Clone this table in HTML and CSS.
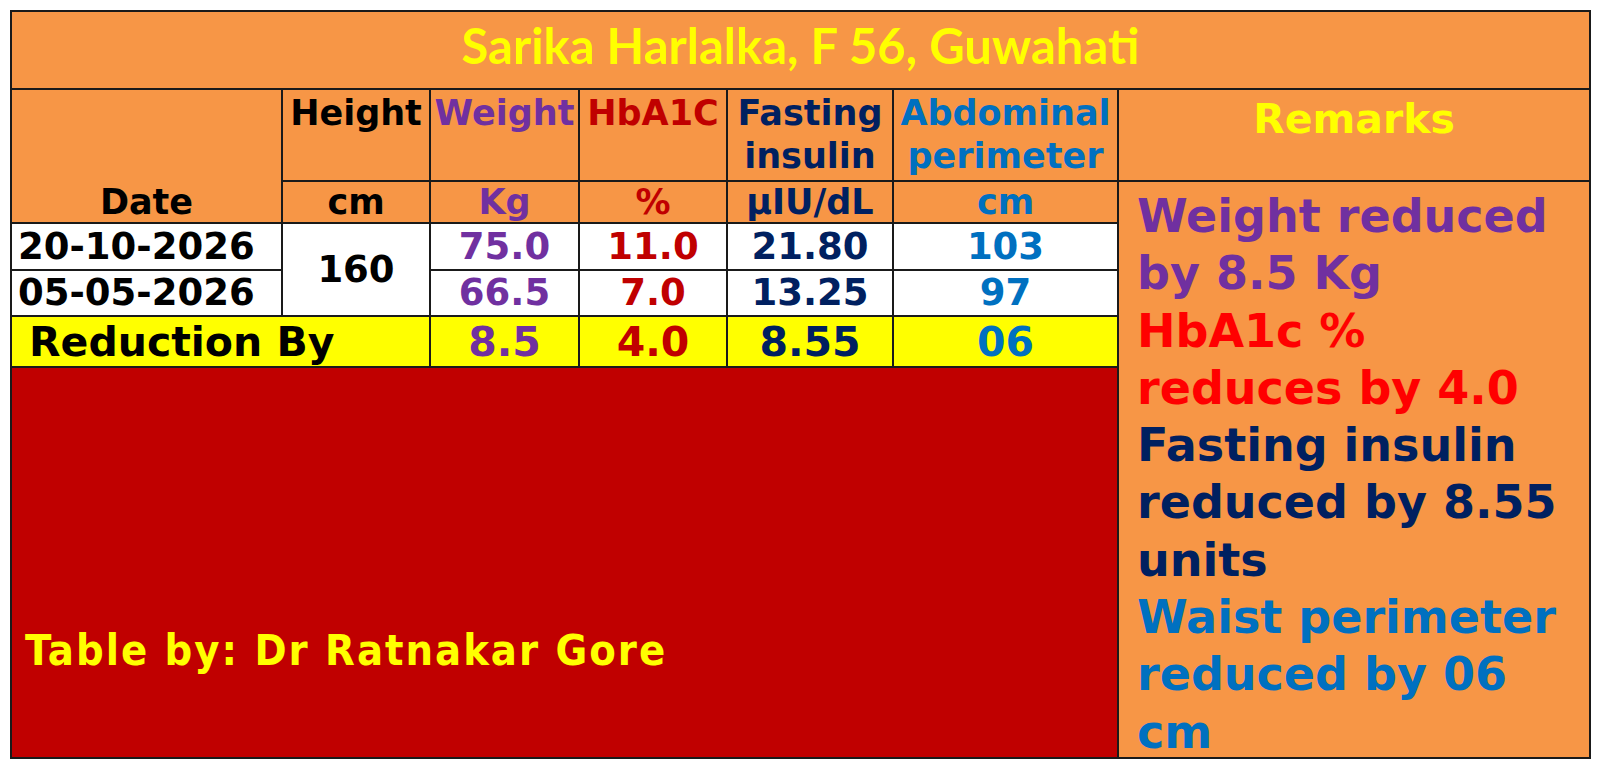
FILE: index.html
```html
<!DOCTYPE html>
<html lang="en">
<head>
<meta charset="utf-8">
<title>Sarika Harlalka</title>
<link rel="stylesheet" href="styles.css">
</head>
<body>
<table class="sheet">
  <colgroup>
    <col class="col-date">
    <col class="col-height">
    <col class="col-weight">
    <col class="col-hba">
    <col class="col-fast">
    <col class="col-abd">
    <col class="col-rem">
  </colgroup>
  <tr class="row-title">
    <td colspan="7" class="title">Sarika Harlalka, F 56, Guwahati</td>
  </tr>
  <tr class="row-head">
    <td rowspan="2" class="date-head">Date</td>
    <td class="head black">Height</td>
    <td class="head purple">Weight</td>
    <td class="head crimson">HbA1C</td>
    <td class="head navy">Fasting<br>insulin</td>
    <td class="head blue">Abdominal<br>perimeter</td>
    <td class="remarks-head">Remarks</td>
  </tr>
  <tr class="row-unit">
    <td class="unit black">cm</td>
    <td class="unit purple">Kg</td>
    <td class="unit crimson">%</td>
    <td class="unit navy">µIU/dL</td>
    <td class="unit blue">cm</td>
    <td rowspan="5" class="remarks">
      <p class="note purple">Weight reduced by 8.5 Kg</p>
      <p class="note red">HbA1c % reduces by 4.0</p>
      <p class="note navy">Fasting insulin reduced by 8.55 units</p>
      <p class="note blue">Waist perimeter reduced by 06 cm</p>
    </td>
  </tr>
  <tr class="row-data1">
    <td class="date black">20-10-2026</td>
    <td rowspan="2" class="val black">160</td>
    <td class="val purple">75.0</td>
    <td class="val crimson">11.0</td>
    <td class="val navy">21.80</td>
    <td class="val blue">103</td>
  </tr>
  <tr class="row-data2">
    <td class="date black">05-05-2026</td>
    <td class="val purple">66.5</td>
    <td class="val crimson">7.0</td>
    <td class="val navy">13.25</td>
    <td class="val blue">97</td>
  </tr>
  <tr class="row-reduce">
    <td colspan="2" class="reduce-label black">Reduction By</td>
    <td class="big purple">8.5</td>
    <td class="big crimson">4.0</td>
    <td class="big navy">8.55</td>
    <td class="big blue">06</td>
  </tr>
  <tr class="row-foot">
    <td colspan="6" class="credit">Table by: Dr Ratnakar Gore</td>
  </tr>
</table>
</body>
</html>
```

FILE: styles.css
```css
html, body {
  margin: 0;
  padding: 0;
  background: #ffffff;
}

body {
  padding: 10px 0 0 10px;
  font-family: "DejaVu Sans", Verdana, sans-serif;
  font-weight: bold;
}

.sheet {
  border-collapse: collapse;
  table-layout: fixed;
  width: 1579px;
  border: 2px solid #1a1a1a;
}

.sheet td {
  border: 2px solid #1a1a1a;
  padding: 0;
  text-align: center;
  vertical-align: middle;
  white-space: nowrap;
}

.col-date   { width: 271px; }
.col-height { width: 148px; }
.col-weight { width: 149px; }
.col-hba    { width: 148px; }
.col-fast   { width: 166px; }
.col-abd    { width: 225px; }
.col-rem    { width: 472px; }

.row-title  { height: 78px; }
.row-head   { height: 92px; }
.row-unit   { height: 41px; }
.row-data1  { height: 47px; }
.row-data2  { height: 46px; }
.row-reduce { height: 51px; }
.row-foot   { height: 391px; }

/* colours */
.sheet .black   { color: #000000; }
.sheet .purple  { color: #7030a0; }
.sheet .crimson { color: #c00000; }
.sheet .red     { color: #ff0000; }
.sheet .navy    { color: #002060; }
.sheet .blue    { color: #0070c0; }

.sheet .title {
  background: #f79646;
  color: #ffff00;
  font-family: "Lato", "Open Sans", sans-serif;
  font-weight: 700;
  font-size: 49px;
  line-height: 60px;
  padding-bottom: 10px;
}

.row-head td,
.row-unit td {
  background: #f79646;
}

.sheet .head {
  vertical-align: top;
  font-size: 35px;
  line-height: 43px;
  padding-top: 2px;
}

.sheet .date-head {
  vertical-align: bottom;
  font-size: 35px;
  line-height: 40px;
  color: #000000;
}

.sheet .remarks-head {
  vertical-align: top;
  color: #ffff00;
  font-size: 41px;
  line-height: 50px;
  padding-top: 4px;
}

.unit {
  font-size: 35px;
  line-height: 40px;
}

.row-data1 td,
.row-data2 td {
  background: #ffffff;
  font-size: 37px;
  line-height: 44px;
}

.sheet .date {
  text-align: left;
  padding-left: 6px;
}

.row-reduce td {
  background: #ffff00;
}

.sheet .reduce-label {
  text-align: left;
  padding-left: 17px;
  font-size: 41px;
  line-height: 48px;
}

.big {
  font-size: 41px;
  line-height: 48px;
}

.sheet .credit {
  background: #c00000;
  color: #ffff00;
  text-align: left;
  vertical-align: top;
  padding: 257px 0 0 13px;
  font-family: "DejaVu Sans Condensed", "DejaVu Sans", sans-serif;
  font-stretch: condensed;
  font-size: 43px;
  line-height: 50px;
  letter-spacing: 2px;
}

.sheet .remarks {
  background: #f79646;
  vertical-align: top;
  text-align: left;
  white-space: normal;
  padding: 6px 16px 0 18px;
}

.note {
  margin: 0;
  font-size: 46px;
  line-height: 57.3px;
}

.note:last-child {
  margin-bottom: -8px;
}
```
